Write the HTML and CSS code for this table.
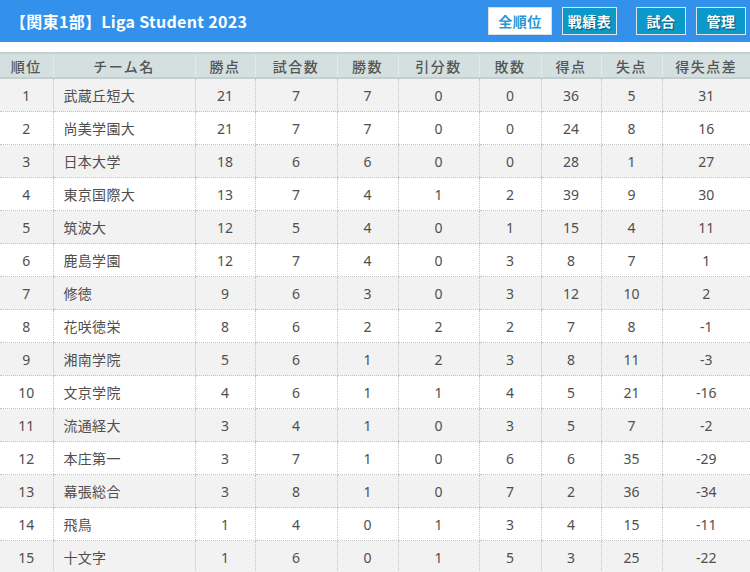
FILE: index.html
```html
<!DOCTYPE html>
<html lang="ja">
<head>
<meta charset="utf-8">
<title>Liga Student 2023</title>
<link rel="stylesheet" href="styles.css">
</head>
<body>
<header class="topbar">
  <h1 class="title">【関東1部】Liga Student 2023</h1>
  <nav class="nav">
    <a class="btn btn-active">全順位</a>
    <a class="btn btn-record">戦績表</a>
    <a class="btn btn-match">試合</a>
    <a class="btn btn-admin">管理</a>
  </nav>
</header>
<table class="standings">
  <colgroup>
    <col class="c-rank"><col class="c-team"><col class="c-pts"><col class="c-gp"><col class="c-w"><col class="c-d"><col class="c-l"><col class="c-gf"><col class="c-ga"><col class="c-gd">
  </colgroup>
  <thead>
    <tr><th>順位</th><th>チーム名</th><th>勝点</th><th>試合数</th><th>勝数</th><th>引分数</th><th>敗数</th><th>得点</th><th>失点</th><th>得失点差</th></tr>
  </thead>
  <tbody>
    <tr><td>1</td><td class="team">武蔵丘短大</td><td>21</td><td>7</td><td>7</td><td>0</td><td>0</td><td>36</td><td>5</td><td>31</td></tr>
    <tr><td>2</td><td class="team">尚美学園大</td><td>21</td><td>7</td><td>7</td><td>0</td><td>0</td><td>24</td><td>8</td><td>16</td></tr>
    <tr><td>3</td><td class="team">日本大学</td><td>18</td><td>6</td><td>6</td><td>0</td><td>0</td><td>28</td><td>1</td><td>27</td></tr>
    <tr><td>4</td><td class="team">東京国際大</td><td>13</td><td>7</td><td>4</td><td>1</td><td>2</td><td>39</td><td>9</td><td>30</td></tr>
    <tr><td>5</td><td class="team">筑波大</td><td>12</td><td>5</td><td>4</td><td>0</td><td>1</td><td>15</td><td>4</td><td>11</td></tr>
    <tr><td>6</td><td class="team">鹿島学園</td><td>12</td><td>7</td><td>4</td><td>0</td><td>3</td><td>8</td><td>7</td><td>1</td></tr>
    <tr><td>7</td><td class="team">修徳</td><td>9</td><td>6</td><td>3</td><td>0</td><td>3</td><td>12</td><td>10</td><td>2</td></tr>
    <tr><td>8</td><td class="team">花咲徳栄</td><td>8</td><td>6</td><td>2</td><td>2</td><td>2</td><td>7</td><td>8</td><td>-1</td></tr>
    <tr><td>9</td><td class="team">湘南学院</td><td>5</td><td>6</td><td>1</td><td>2</td><td>3</td><td>8</td><td>11</td><td>-3</td></tr>
    <tr><td>10</td><td class="team">文京学院</td><td>4</td><td>6</td><td>1</td><td>1</td><td>4</td><td>5</td><td>21</td><td>-16</td></tr>
    <tr><td>11</td><td class="team">流通経大</td><td>3</td><td>4</td><td>1</td><td>0</td><td>3</td><td>5</td><td>7</td><td>-2</td></tr>
    <tr><td>12</td><td class="team">本庄第一</td><td>3</td><td>7</td><td>1</td><td>0</td><td>6</td><td>6</td><td>35</td><td>-29</td></tr>
    <tr><td>13</td><td class="team">幕張総合</td><td>3</td><td>8</td><td>1</td><td>0</td><td>7</td><td>2</td><td>36</td><td>-34</td></tr>
    <tr><td>14</td><td class="team">飛鳥</td><td>1</td><td>4</td><td>0</td><td>1</td><td>3</td><td>4</td><td>15</td><td>-11</td></tr>
    <tr><td>15</td><td class="team">十文字</td><td>1</td><td>6</td><td>0</td><td>1</td><td>5</td><td>3</td><td>25</td><td>-22</td></tr>
  </tbody>
</table>
</body>
</html>
```
FILE: styles.css
```css
html, body {
  margin: 0;
  padding: 0;
  background: #ffffff;
}
body {
  font-family: "Noto Sans", "Noto Sans CJK JP", sans-serif;
  color: #444;
  width: 750px;
  overflow: hidden;
}
.topbar {
  height: 42px;
  background: #3391ec;
  display: flex;
  align-items: center;
  justify-content: space-between;
  padding: 0 4px 0 10px;
  box-sizing: border-box;
}
.title {
  margin: 0;
  font-family: "Noto Sans CJK JP", sans-serif;
  font-size: 16px;
  font-weight: 700;
  color: #ffffff;
  letter-spacing: 0.3px;
}
.nav {
  display: flex;
  margin-top: 0;
}
.btn {
  display: flex;
  align-items: center;
  justify-content: center;
  height: 28px;
  box-sizing: border-box;
  padding: 0;
  background: #0a99c9;
  border: 1px solid #dfe6ea;
  color: #ffffff;
  font-family: "Noto Sans CJK JP", sans-serif;
  font-size: 14px;
  font-weight: 700;
  text-shadow: 1px 1px 1px rgba(0,0,0,0.45);
  letter-spacing: 0.5px;
}
.btn-active {
  width: 64px;
  background: #ffffff;
  border-color: #d7dde0;
  color: #2a97d4;
  text-shadow: none;
}
.btn-record {
  width: 55px;
  margin-left: 10px;
}
.btn-match {
  width: 50px;
  margin-left: 19px;
}
.btn-admin {
  width: 50px;
  margin-left: 10px;
}
.standings {
  margin-top: 10px;
  width: 750px;
  border-collapse: collapse;
  table-layout: fixed;
  font-size: 14px;
}
.c-rank { width: 53px; }
.c-team { width: 142px; }
.c-pts { width: 60px; }
.c-gp { width: 82px; }
.c-w { width: 61px; }
.c-d { width: 81px; }
.c-l { width: 62px; }
.c-gf { width: 60px; }
.c-ga { width: 61px; }
.c-gd { width: 88px; }
.standings th {
  height: 23px;
  padding: 0;
  background: #d4e0e0;
  color: #555;
  font-family: "Noto Sans CJK JP", sans-serif;
  font-weight: 500;
  font-size: 14px;
  letter-spacing: 1.5px;
  border-top: 2px solid #c6cfd0;
  border-bottom: 2px solid #c6cfd0;
  border-left: 1px dotted #eef3f3;
  text-align: center;
}
.standings th:first-child,
.standings td:first-child {
  border-left: none;
}
.standings td {
  height: 32px;
  padding: 0;
  text-align: center;
  border-left: 1px dotted #c4c4c4;
  border-bottom: 1px dotted #c4c4c4;
  color: #4f4f4f;
}
.standings td.team {
  text-align: left;
  padding-left: 10px;
  font-family: "Noto Sans CJK JP", sans-serif;
  letter-spacing: 0.3px;
}
.standings tbody tr:nth-child(odd) td {
  background: #f2f2f2;
}
.standings tbody tr:nth-child(even) td {
  background: #ffffff;
}
```
